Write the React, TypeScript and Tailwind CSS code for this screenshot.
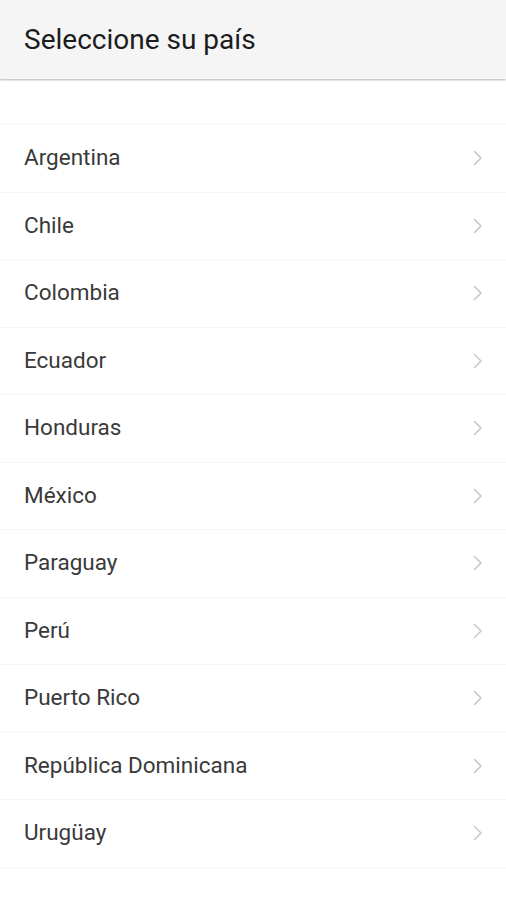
import React from "react";

const countries = [
  "Argentina",
  "Chile",
  "Colombia",
  "Ecuador",
  "Honduras",
  "México",
  "Paraguay",
  "Perú",
  "Puerto Rico",
  "República Dominicana",
  "Urugüay",
];

const Chevron = () => (
  <svg width="12" height="18" viewBox="0 0 12 18" fill="none" className="shrink-0">
    <path d="M2.5 2.5l6.5 6.5-6.5 6.5" stroke="#c8c8c8" strokeWidth="1.6" strokeLinecap="round" strokeLinejoin="round" />
  </svg>
);

export default function App() {
  return (
    <div className="w-[506px] h-[900px] bg-white overflow-hidden" style={{ fontFamily: "Roboto, 'Noto Sans', sans-serif" }}>
      <div className="h-[79px] bg-[#f5f5f5] flex items-center px-6 shadow-[0_1px_2px_rgba(0,0,0,0.3)] relative z-10">
        <h1 className="text-[28px] text-[#1c1c1c]">Seleccione su país</h1>
      </div>
      <ul className="mt-[45px] border-t border-[#f7f7f7]">
        {countries.map((c) => (
          <li key={c} className="h-[67.5px] flex items-center justify-between pl-6 pr-[22px] border-b border-[#f7f7f7]">
            <span className="text-[22.5px] text-[#3a3a3a]">{c}</span>
            <Chevron />
          </li>
        ))}
      </ul>
    </div>
  );
}
